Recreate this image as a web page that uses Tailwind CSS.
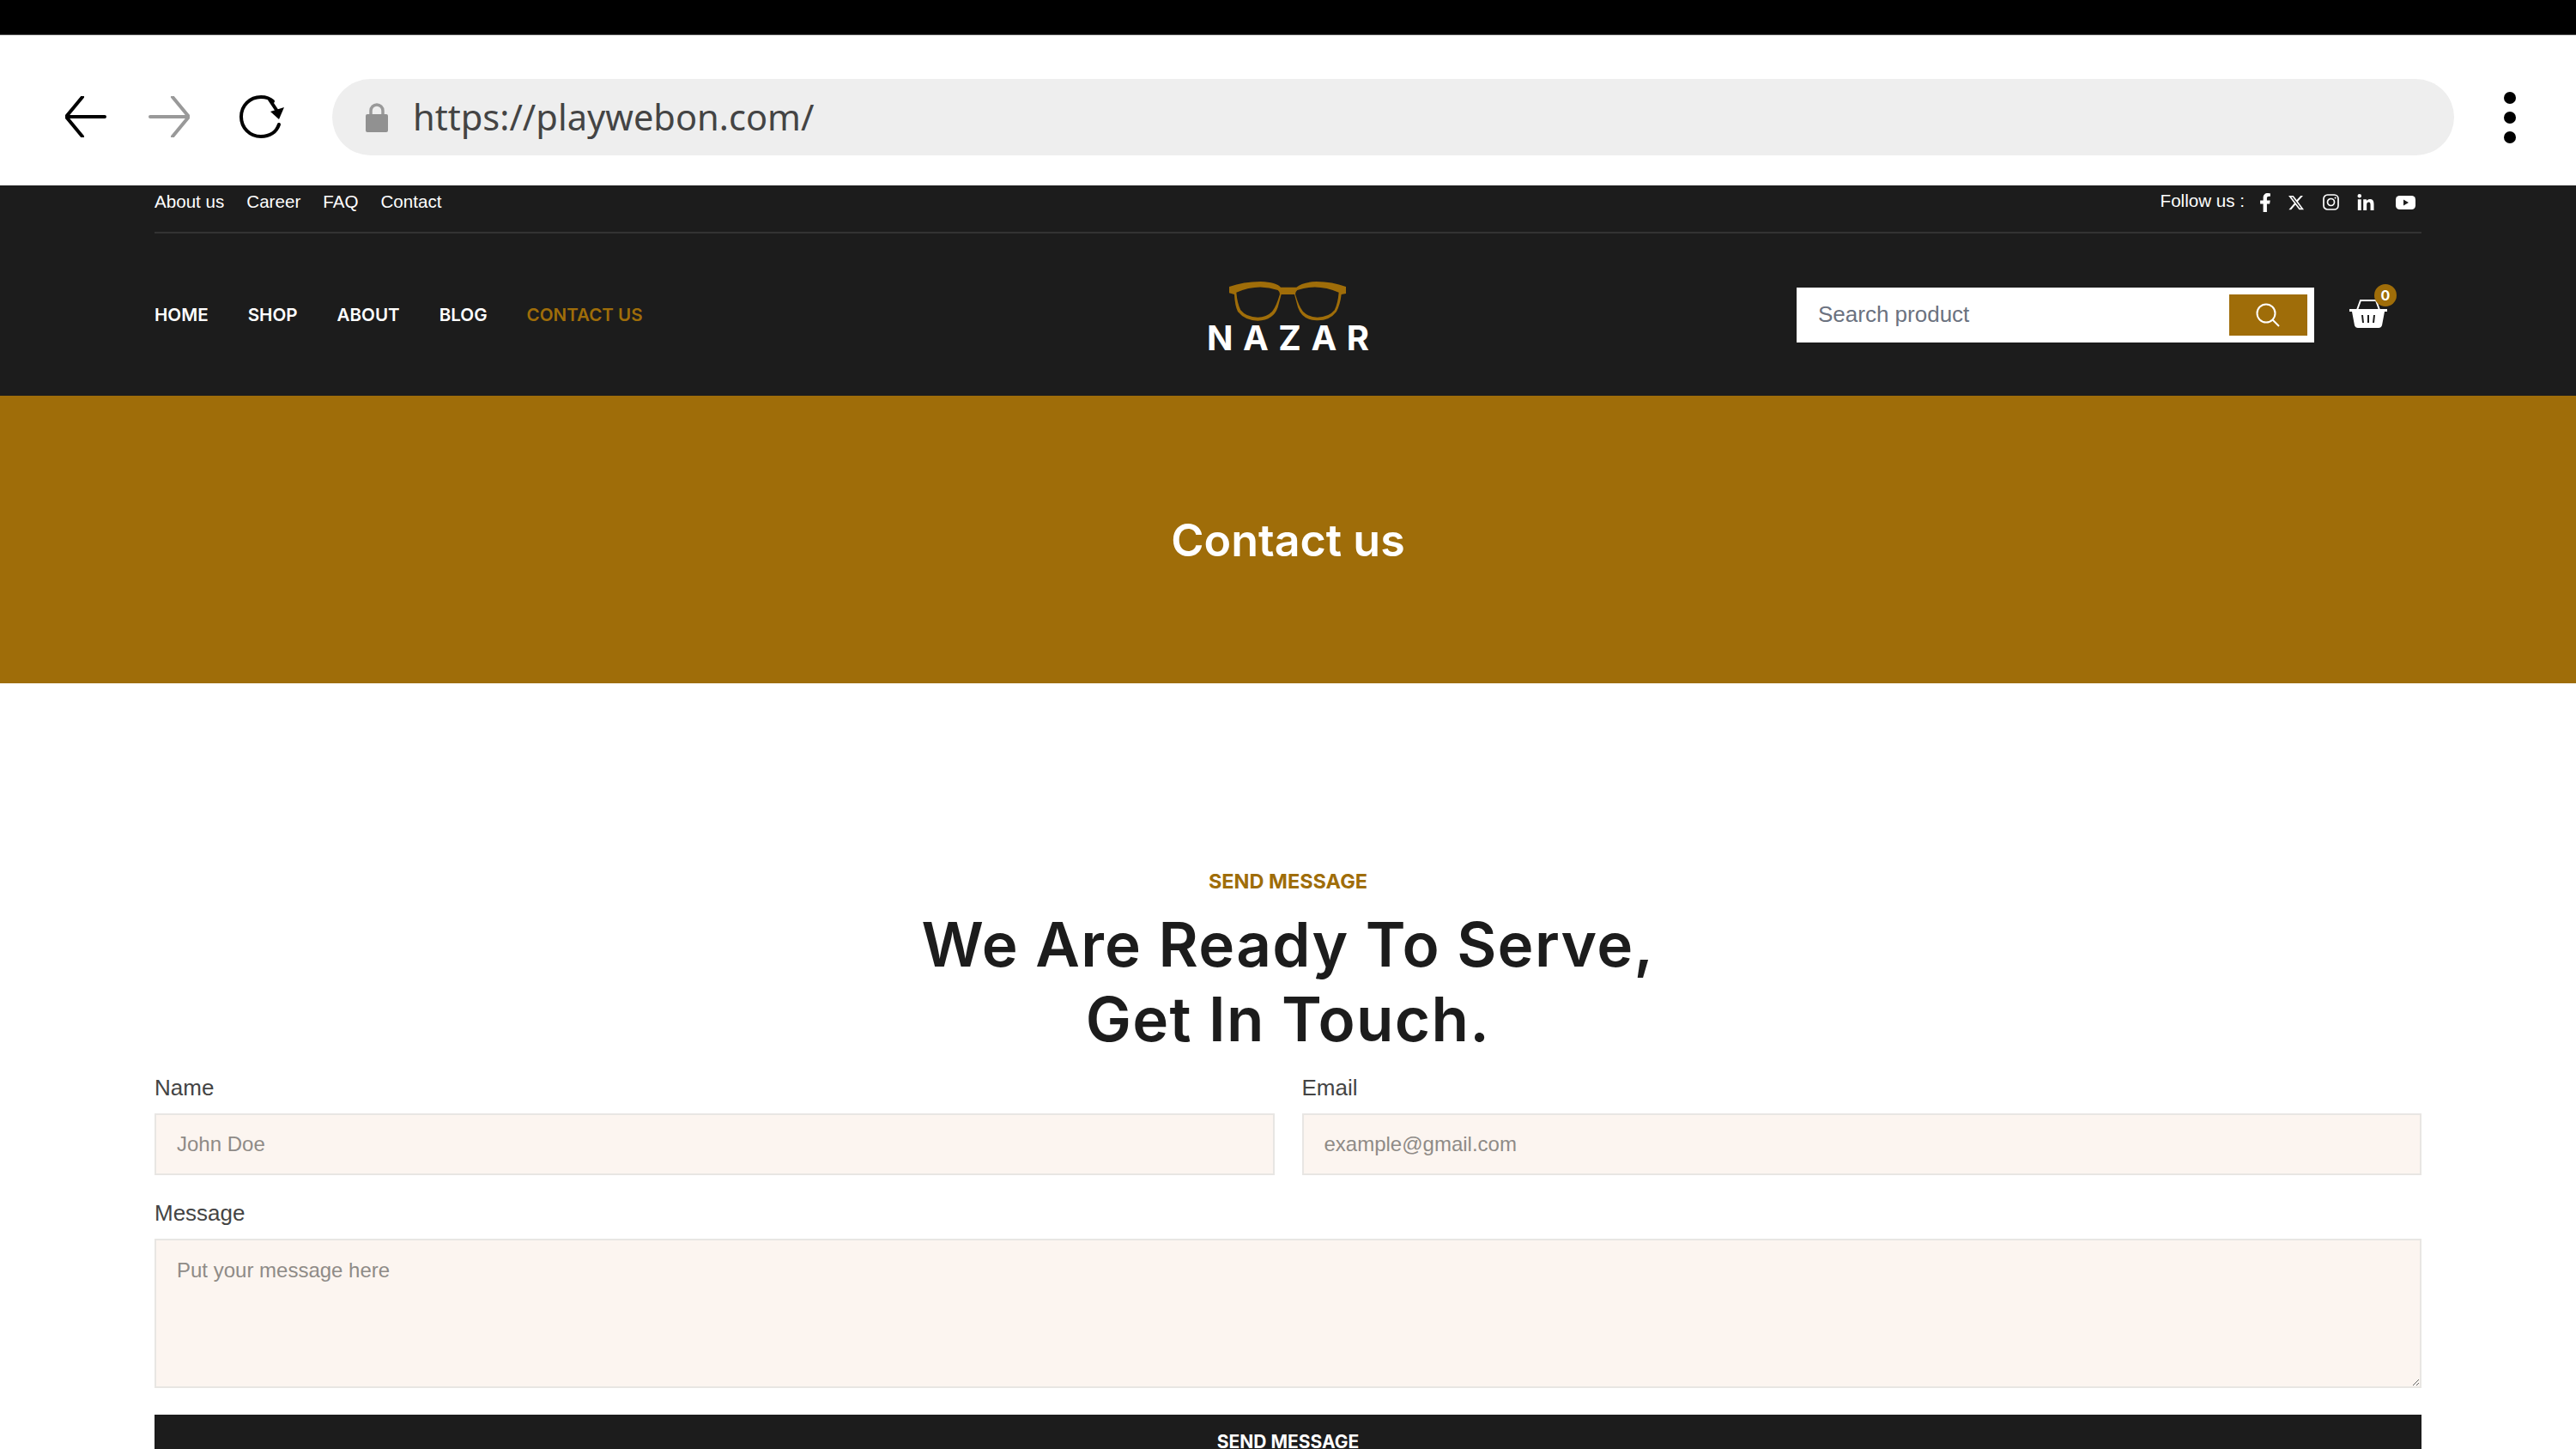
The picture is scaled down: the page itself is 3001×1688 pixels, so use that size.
<!DOCTYPE html>
<html lang="en">

<head>
    <meta charset="UTF-8">
    <title>Contact us | Nazar</title>
    <script src="https://cdn.jsdelivr.net/npm/@tailwindcss/browser@4"></script>
</head>

<body class="bg-white h-[1688px] overflow-hidden font-['Liberation_Sans',sans-serif]">

    <!-- Browser chrome -->
    <div class="h-10 bg-black border-b border-[#555] box-content"></div>
    <div class="h-[175px] bg-white flex items-center pl-[76px] pt-[16px]">
        <svg class="w-12 h-12 mt-[-2px]" viewBox="0 0 48 48" fill="none" stroke="#000" stroke-width="4" stroke-linecap="round" stroke-linejoin="round"><path d="M46 24H1M20 1 1 24l19 23"/></svg>
        <svg class="w-12 h-12 mt-[-2px] ml-[49px]" viewBox="0 0 48 48" fill="none" stroke="#999" stroke-width="4" stroke-linecap="round" stroke-linejoin="round"><path d="M2 24h45M28 1l19 23-19 23"/></svg>
        <svg class="w-[54px] h-[50px] mt-[-2px] ml-[57px]" viewBox="0 0 54 50" fill="none" stroke="#000" stroke-width="4" stroke-linecap="round"><path d="M40 7C36 3 32 2 26 2 13 2 3 12 3 25s10 23 23 23c10 0 18-5 21-14"/><path d="M53 14 47 28 37 19Z" fill="#000" stroke="none"/><path d="M36 5 46 20" stroke-width="4"/></svg>
        <div class="ml-[55px] w-[2472px] h-[89px] rounded-full bg-[#eeeeee] flex items-center pl-[39px]">
            <svg class="w-[26px] h-[34px]" viewBox="0 0 26 34"><path d="M6 15V9a7 7 0 0 1 14 0v6" fill="none" stroke="#999" stroke-width="3.5"/><rect y="13" width="26" height="21" rx="2" fill="#919191"/></svg>
            <span class="ml-[29px] text-[41.6px] text-[#444] font-['Noto_Sans',sans-serif] leading-none">https://playwebon.com/</span>
        </div>
        <div class="ml-[58px] flex flex-col gap-[9px]">
            <span class="block w-[14px] h-[14px] rounded-full bg-black"></span>
            <span class="block w-[14px] h-[14px] rounded-full bg-black"></span>
            <span class="block w-[14px] h-[14px] rounded-full bg-black"></span>
        </div>
    </div>

    <!-- Header -->
    <header class="h-[245px] bg-[#1c1c1c] px-[180px] text-white">
        <div class="h-[56px] border-b-2 border-[#333] flex items-start justify-between pt-[6px]">
            <nav class="flex gap-[26px] text-[20.6px] leading-[25px]">
                <a href="#">About us</a>
                <a href="#">Career</a>
                <a href="#">FAQ</a>
                <a href="#">Contact</a>
            </nav>
            <div class="flex items-center h-[25px] pr-[7px]">
                <span class="text-[20.6px] mr-[17px]">Follow us :</span>
                <svg class="h-[22px] w-[14px] mt-[2px] fill-white" viewBox="0 0 320 512"><path d="M279.14 288l14.22-92.66h-88.91v-60.13c0-25.35 12.42-50.06 52.24-50.06h40.42V6.26S260.43 0 225.36 0c-73.22 0-121.08 44.38-121.08 124.72v70.62H22.89V288h81.39v224h100.17V288z"/></svg>
                <svg class="h-[20px] w-[20px] mt-[2px] ml-[19px] fill-white" viewBox="0 0 512 512"><path d="M389.2 48h70.6L305.6 224.2 487 464H345L233.7 318.6 106.5 464H35.8L200.7 275.5 26.8 48H172.4L272.9 180.9 389.2 48zM364.4 421.8h39.1L151.1 88h-42L364.4 421.8z"/></svg>
                <svg class="h-[19px] w-[19px] mt-[2px] ml-[21px]" viewBox="0 0 19 19" fill="none" stroke="#fff" stroke-width="1.7"><rect x="1" y="1" width="17" height="17" rx="4.5"/><circle cx="9.5" cy="9.5" r="4"/><circle cx="14.6" cy="4.4" r="1" fill="#fff" stroke="none"/></svg>
                <svg class="h-[19px] w-[20px] mt-[2px] ml-[21px] fill-white" viewBox="0 0 448 448"><path d="M100.28 448H7.4V148.9h92.88zM53.79 108.1C24.09 108.1 0 83.5 0 53.8a53.79 53.79 0 0 1 107.58 0c0 29.7-24.1 54.3-53.79 54.3zM447.9 448h-92.68V302.4c0-34.7-.7-79.2-48.29-79.2-48.29 0-55.69 37.7-55.69 76.7V448h-92.78V148.9h89.08v40.8h1.3c12.4-23.5 42.69-48.3 87.88-48.3 94 0 111.28 61.9 111.28 142.3V448z"/></svg>
                <svg class="h-[16px] w-[23px] mt-[2px] ml-[25px]" viewBox="0 0 23 16"><rect width="23" height="16" rx="4.5" fill="#fff"/><path d="M9 4.5v7l6-3.5z" fill="#1c1c1c"/></svg>
            </div>
        </div>
        <div class="h-[189px] grid grid-cols-3 items-center">
            <nav class="flex gap-[46px] pt-[2px] text-[20.6px] font-semibold font-['Inter',sans-serif]">
                <a href="#">HOME</a>
                <a href="#">SHOP</a>
                <a href="#">ABOUT</a>
                <a href="#">BLOG</a>
                <a href="#" class="text-[#9f6d09]">CONTACT US</a>
            </nav>
            <div class="flex flex-col items-center pt-[8px]">
                <svg class="w-[136px] h-[46px]" viewBox="0 0 408 138"><path fill="#9f6d09" fill-rule="evenodd" d="M0 18Q50 0 110 0q55 2 70 20h55q20-18 70-20 55 0 103 18v24l-16 3q-4 35-17 60-25 33-70 31-50-1-65-46l-12-45h-46l-12 45q-15 45-70 47-45-1-70-32-10-20-12-60L0 40ZM25 38Q100 5 170 30q10 8 5 20-10 35-25 55-20 20-50 20-40 0-60-25-12-25-15-62ZM383 38Q308 5 238 30q-10 8-5 20 10 35 25 55 20 20 50 20 40 0 60-25 12-25 15-62Z"/></svg>
                <span class="mt-[1px] text-[40px] leading-[38px] font-bold tracking-[11.5px] mr-[-11.5px] font-['Inter',sans-serif]">NAZAR</span>
            </div>
            <div class="flex justify-end items-center pr-[40px]">
                <div class="w-[603px] h-[64px] bg-white flex items-center pl-[25px] pr-[8px]">
                    <span class="text-[26px] text-[#6b7280] flex-1">Search product</span>
                    <button class="w-[91px] h-[48px] bg-[#9f6d09] flex items-center justify-center">
                        <svg class="w-[28px] h-[28px]" viewBox="0 0 28 28" fill="none" stroke="#fff" stroke-width="2"><circle cx="12" cy="12" r="10.5"/><path d="m19.5 19.5 7.5 7.5"/></svg>
                    </button>
                </div>
                <div class="relative ml-[41px] w-[44px] h-[34px] mt-[-4px]">
                    <svg class="w-[44px] h-[34px]" viewBox="0 0 44 34"><path d="M9 13 13 2h18l4 11" fill="none" stroke="#fff" stroke-width="2"/><path d="M0 12h44v3h-3l-3 16q-1 3-4 3H10q-3 0-4-3L3 15H0Z" fill="#fff"/><path d="M15 19l1 9M22 19v9M29 19l-1 9" stroke="#1c1c1c" stroke-width="2"/></svg>
                    <span class="absolute left-[29px] top-[-17px] w-[26px] h-[26px] rounded-full bg-[#9f6d09] text-white text-[16px] font-bold flex items-center justify-center font-['Inter',sans-serif]">0</span>
                </div>
            </div>
        </div>
    </header>

    <!-- Banner -->
    <section class="h-[335px] bg-[#9f6d09] flex items-center justify-center pt-[2px]">
        <h1 class="text-[52px] font-semibold text-white font-['Inter',sans-serif]">Contact us</h1>
    </section>

    <!-- Contact form -->
    <section class="px-[180px] pt-[218px] text-center">
        <p class="text-[23.5px] leading-[26px] font-bold text-[#9f6d09] font-['Inter',sans-serif]">SEND MESSAGE</p>
        <h2 class="mt-[17px] text-[71px] leading-[87px] tracking-[1.3px] font-semibold text-[#1c1c1c] font-['Inter',sans-serif]">We Are Ready To Serve,<br>Get In Touch.</h2>

        <form class="mt-[21px] text-left text-[#444]">
            <div class="grid grid-cols-2 gap-[32px]">
                <div>
                    <label class="block text-[26px] leading-[30px] mb-[15px]">Name</label>
                    <input type="text" placeholder="John Doe" class="w-full h-[72px] px-[24px] bg-[#fcf5f0] border-2 border-[#e8e6e3] text-[24px] placeholder:text-[#8f8b87] outline-none">
                </div>
                <div>
                    <label class="block text-[26px] leading-[30px] mb-[15px]">Email</label>
                    <input type="email" placeholder="example@gmail.com" class="w-full h-[72px] px-[24px] bg-[#fcf5f0] border-2 border-[#e8e6e3] text-[24px] placeholder:text-[#8f8b87] outline-none">
                </div>
            </div>
            <label class="block mt-[29px] text-[26px] leading-[30px] mb-[15px]">Message</label>
            <textarea placeholder="Put your message here" class="block w-full h-[174px] px-[24px] py-[21px] bg-[#fcf5f0] border-2 border-[#e8e6e3] text-[24px] leading-[28px] placeholder:text-[#8f8b87] outline-none"></textarea>
            <button type="button" class="block mt-[31px] w-full h-[64px] bg-[#1c1c1c] text-white text-[21px] font-bold font-['Inter',sans-serif]">SEND MESSAGE</button>
        </form>
    </section>

</body>

</html>
